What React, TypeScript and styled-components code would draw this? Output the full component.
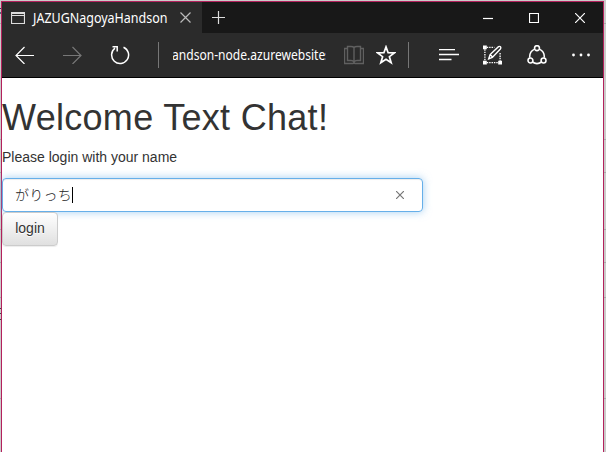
import React from "react";
import styled, { createGlobalStyle } from "styled-components";

const Global = createGlobalStyle`
  * { box-sizing: border-box; }
  html, body, #root { margin: 0; height: 100%; }
  body { overflow: hidden; background: #cccaca; font-family: "Liberation Sans", Arial, sans-serif; }
`;
const Desktop = styled.div`
  height: 452px; width: 606px; padding: 1px 2px 0 1px; overflow: hidden;
  background:
    linear-gradient(#aaa, #aaa) 0 23px / 606px 1px no-repeat,
    linear-gradient(#345, #345) 0 8px / 1px 1px no-repeat,
    linear-gradient(#567, #567) 0 12px / 1px 2px no-repeat,
    linear-gradient(#aaa, #aaa) 0 139px / 606px 1px no-repeat,
    linear-gradient(#aaa, #aaa) 0 172px / 606px 1px no-repeat,
    linear-gradient(#aaa, #aaa) 0 229px / 606px 1px no-repeat,
    linear-gradient(#aaa, #aaa) 0 262px / 606px 1px no-repeat,
    linear-gradient(#aaa, #aaa) 0 297px / 606px 1px no-repeat,
    linear-gradient(#444, #444) 0 308px / 1px 1px no-repeat,
    linear-gradient(#444, #444) 0 313px / 1px 1px no-repeat,
    linear-gradient(#444, #444) 0 319px / 1px 1px no-repeat,
    linear-gradient(#aaa, #aaa) 0 398px / 606px 1px no-repeat,
    #cccaca;
`;
const Window = styled.div`
  height: 451px; border: 1px solid #b3215c; border-bottom: 0; background: #fff;
  display: flex; flex-direction: column;
`;
const TitleBar = styled.header`
  height: 31px; background: #181818; display: flex; flex: none;
`;
const Tab = styled.div`
  width: 200px; background: #2b2b2b; display: flex; align-items: center;
  padding-left: 9px; color: #fff;
`;
const TabTitle = styled.span`
  width: 147px; margin-left: 8px; white-space: nowrap; line-height: 20px;
  font-family: "Noto Sans", sans-serif;
`;
const Controls = styled.div`
  margin-left: auto; display: flex;
`;
const ControlButton = styled.div`
  width: 46px; display: grid; place-items: center;
`;
const NewTab = styled.div`
  width: 32px; display: grid; place-items: center;
`;
const Toolbar = styled.nav`
  height: 45px; background: #2b2b2b; border-bottom: 1px solid #000; flex: none;
  display: flex; align-items: center;
`;
const Tool = styled.div<{ $w: number }>`
  width: ${(p) => p.$w}px; height: 44px; flex: none; display: grid; place-items: center;
`;
const Divider = styled.div`
  width: 1px; height: 26px; background: #777; flex: none;
`;
const Address = styled.div`
  width: 153px; margin: 0 0 0 14px; overflow: hidden; flex: none; height: 22px;
`;
const AddressText = styled.div`
  margin-left: -1px; font-family: "Noto Sans", sans-serif;
`;
const Page = styled.main`
  flex: 1; color: #333; font-size: 14px; line-height: 20px;
`;
const Heading = styled.h1`
  margin: 20px 0 0; font-size: 36px; letter-spacing: .3px; font-weight: 400; line-height: 40px; height: 40px; color: #333;
`;
const Intro = styled.p`
  margin: 9px 0 11px; height: 20px;
`;
const Field = styled.div`
  width: 421px; height: 34px; border: 1px solid #66afe9; border-radius: 4px;
  box-shadow: inset 0 1px 1px rgba(0,0,0,.075), 0 0 8px rgba(102,175,233,.6);
  display: flex; align-items: center; padding: 0 18px 0 12px; color: #555;
`;
const FieldValue = styled.span`
  font: 300 14px/20px "Noto Sans CJK JP", sans-serif; letter-spacing: .25px; padding-bottom: 2px; color: #222;
`;
const Caret = styled.div`
  width: 1px; height: 16px; background: #000; margin-right: auto;
`;
const Login = styled.button`
  display: block; width: 56px; height: 34px; padding: 0 0 2px; border: 1px solid #ccc; border-radius: 4px;
  background: linear-gradient(#fff, #e0e0e0); box-shadow: inset 0 1px 0 rgba(255,255,255,.15), 0 1px 1px rgba(0,0,0,.075);
  font: 14px/20px "Liberation Sans", Arial, sans-serif; color: #333; text-shadow: 0 1px 0 #fff;
  position: relative;
`;
const Fit = styled.svg`
  display: block; overflow: visible;
`;
const Icon = styled.svg<{ $color?: string }>`
  display: block; fill: none; stroke: ${(p) => p.$color || "#fff"}; stroke-width: 1.2;
`;

/* Single line of text held to a fixed advance width. */
const FitText = ({ text, width, size, color, height, baseline }: {
  text: string; width: number; size: number; color: string; height: number; baseline: number;
}) => (
  <Fit width={width} height={height}>
    <text x="0" y={baseline} fontSize={size} fill={color} textLength={width} lengthAdjust="spacingAndGlyphs">{text}</text>
  </Fit>
);

export default function App() {
  return (
    <>
      <Global />
      <Desktop>
        <Window>
          <TitleBar>
            <Tab>
              <Icon width="14" height="14" viewBox="0 0 14 14" $color="#ddd">
                <path d="M.5 1.500h13v11H.5zM.5 4.500h13M1 2.500h12" />
              </Icon>
              <TabTitle>
                <FitText text="JAZUGNagoyaHandson" width={134.500} size={13.500} color="#fff" height={20} baseline={15} />
              </TabTitle>
              <Icon width="11" height="11" viewBox="0 0 11 11" $color="#bbb"><path d="M.5.5l10 10M10.500.5l-10 10" /></Icon>
            </Tab>
            <NewTab>
              <Icon width="13" height="13" viewBox="0 0 13 13" $color="#ddd"><path d="M6.500 0v13M0 6.500h13" /></Icon>
            </NewTab>
            <Controls>
              <ControlButton><Icon width="10" height="10" viewBox="0 0 10 10"><path d="M0 5.500h10" /></Icon></ControlButton>
              <ControlButton><Icon width="10" height="10" viewBox="0 0 10 10"><path d="M.5.5h9v9h-9z" /></Icon></ControlButton>
              <ControlButton><Icon width="10" height="10" viewBox="0 0 10 10"><path d="M0 0l10 10M10 0L0 10" /></Icon></ControlButton>
            </Controls>
          </TitleBar>
          <Toolbar>
            <Tool $w={45}><Icon width="19" height="18" viewBox="0 0 19 18"><path d="M19 9.500H1M9.500 1L1 9.500 9.500 18" /></Icon></Tool>
            <Tool $w={51}><Icon width="19" height="18" viewBox="0 0 19 18" $color="#777"><path d="M0 9.500H18M9.500 1L18 9.500 9.500 18" /></Icon></Tool>
            <Tool $w={44}>
              <Icon width="20" height="20" viewBox="0 0 20 20">
                <path strokeWidth="1.500" d="M13.500 2.200A8.500 8.500 0 1 1 5 3.200M2.500 1.800h4.700v4.700" />
              </Icon>
            </Tool>
            <Tool $w={16} />
            <Divider />
            <Address>
              <AddressText>
                <FitText text="andson-node.azurewebsites" width={159} size={13.800} color="#fff" height={22} baseline={16} />
              </AddressText>
            </Address>
            <Tool $w={17} />
            <Tool $w={22}>
              <Icon width="20" height="20" viewBox="0 0 20 20" $color="#606060">
                <path strokeWidth="1.400" d="M10 2.500v15M10 2.500Q9 1.500 7 1.500H3.500v14H7q2 0 3 1.500M10 2.500q1-1 3-1h3.500v14H13q-2 0-3 1.500M3.500 3.500h-3v15H9l1-1 1 1h8.500v-15h-3" />
              </Icon>
            </Tool>
            <Tool $w={42}>
              <Icon width="20" height="20" viewBox="0 0 20 20">
                <path strokeWidth="1.700" d="M10 1.900l2.100 5.800 6.200.2-4.900 3.800 1.800 6.100-5.200-3.500-5.200 3.500 1.800-6.100L1.700 7.900l6.200-.2z" />
              </Icon>
            </Tool>
            <Tool $w={1} />
            <Divider />
            <Tool $w={30} />
            <Tool $w={20}><Icon width="20" height="12" viewBox="0 0 20 12"><path strokeWidth="1.500" d="M0 .5h16M0 5.500h20M0 10.500h12.500" /></Icon></Tool>
            <Tool $w={67}>
              <Icon width="19" height="20" viewBox="0 0 20 20">
                <path strokeWidth="1.400" strokeDasharray="1.500 1" d="M4 2h8M2 4v12M4 18h12M18 8v9" />
                <path fill="#fff" stroke="none" d="M0 0h4v4H0zM0 16h4v4H0zM16 16h4v4h-4z" />
                <path strokeWidth="1.500" d="M6 14l1.500-4.500 8.800-8.300q1.700-.7 2.300.5.500 1-.3 2L9.800 12.500zM8 10l2 2" />
              </Icon>
            </Tool>
            <Tool $w={22}>
              <Icon width="20" height="20" viewBox="0 0 22 22">
                <g strokeWidth="1.700">
                  <circle cx="11" cy="3.500" r="2.700" /><circle cx="3.800" cy="17" r="2.700" /><circle cx="18.200" cy="17" r="2.700" />
                  <path d="M8.300 4.500Q2.500 7 3 14M13.700 4.500Q19.500 7 19 14M6 18.700q5 3.500 10 0" />
                </g>
              </Icon>
            </Tool>
            <Tool $w={66}>
              <Icon width="20" height="4" viewBox="0 0 20 4">
                <g fill="#fff" stroke="none"><circle cx="2.500" cy="2" r="1.400" /><circle cx="10" cy="2" r="1.400" /><circle cx="17.500" cy="2" r="1.400" /></g>
              </Icon>
            </Tool>
          </Toolbar>
          <Page>
            <Heading>Welcome Text Chat!</Heading>
            <Intro>Please login with your name</Intro>
            <Field>
              <FieldValue>がりっち</FieldValue>
              <Caret />
              <Icon width="8" height="8" viewBox="0 0 8 8" $color="#777"><path d="M0 0l8 8M8 0L0 8" /></Icon>
            </Field>
            <Login>login</Login>
          </Page>
        </Window>
      </Desktop>
    </>
  );
}
